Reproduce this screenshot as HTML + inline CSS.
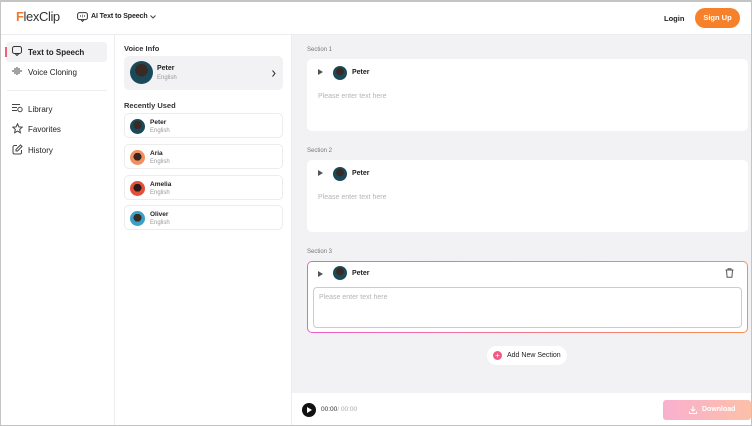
<!DOCTYPE html>
<html><head><meta charset="utf-8"><style>
*{box-sizing:border-box;margin:0;padding:0}
body{width:752px;height:426px;overflow:hidden;font-family:"Liberation Sans",sans-serif;color:#222;background:#fff;position:relative}
.frame{position:absolute;left:0;top:0;width:752px;height:426px;border:1px solid #c4c4c4;border-top-width:2px;z-index:10;pointer-events:none}
.a{position:absolute}
.hdr{left:0;top:0;width:752px;height:35px;border-bottom:1px solid #ececef;background:#fff}
.side{left:0;top:35px;width:115px;height:391px;border-right:1px solid #ececef}
.mid{left:115px;top:35px;width:177px;height:391px;border-right:1px solid #ececef}
.right{left:292px;top:35px;width:460px;height:358px;background:#f2f2f5}
.bot{left:292px;top:393px;width:460px;height:33px;background:#fff}
.nav{position:absolute;left:6px;width:101px;height:20px;font-size:8px;display:flex;align-items:center;padding-left:22px}
.nav svg{position:absolute;left:6px;top:4px}
.av{border-radius:50%;background:radial-gradient(circle at 50% 40%,#3a2a25 0 35%,#1a4a5a 36%);}
.vc{position:absolute;left:9px;width:159px;height:25px;border:1px solid #ececef;border-radius:5px;background:#fff}
.vc .av{position:absolute;left:5px;top:5px;width:15px;height:15px}
.vc b{position:absolute;left:25px;top:5px;font-size:6.5px}
.vc i{position:absolute;left:25px;top:14px;font-size:6px;color:#999;font-style:normal}
.sl{position:absolute;left:15px;font-size:6px;color:#777}
.card{position:absolute;left:15px;width:441px;height:72px;background:#fff;border-radius:5px}
.card .pl{position:absolute;left:11px;top:10px;width:0;height:0;border-left:5px solid #555;border-top:3.5px solid transparent;border-bottom:3.5px solid transparent}
.card .av{position:absolute;left:26px;top:5px;width:14px;height:14px}
.card b{position:absolute;left:45px;top:10px;font-size:7px}
.card .ph{position:absolute;left:11px;top:34px;font-size:7px;color:#b5b5b8}
</style></head><body>
<div class="frame"></div>
<div class="a hdr">
 <div class="a" style="left:16px;top:9px;font-size:13px;letter-spacing:-0.4px;color:#333"><span style="color:#f07a30;font-weight:bold">F</span>lexClip</div>
 <svg class="a" style="left:77px;top:12px" width="11" height="10" viewBox="0 0 11 10"><rect x="0.6" y="0.6" width="9.8" height="7" rx="2" fill="none" stroke="#333" stroke-width="1"/><path d="M4 7.6 5.5 9.4 7 7.6" fill="none" stroke="#333"/><path d="M3.5 3v2M5.5 2.5v3M7.5 3v2" stroke="#333" stroke-width=".6"/></svg>
 <div class="a" style="left:91px;top:13px;font-size:7px;font-weight:bold;letter-spacing:-0.1px">AI Text to Speech</div>
 <svg class="a" style="left:150px;top:15px" width="6" height="4"><path d="M.5.5 3 3 5.5.5" fill="none" stroke="#444"/></svg>
 <div class="a" style="left:664px;top:14px;font-size:7.5px;font-weight:bold">Login</div>
 <div class="a" style="left:695px;top:8px;width:45px;height:20px;border-radius:10px;background:#f7812a;color:#fff;font-size:7.5px;font-weight:bold;text-align:center;line-height:20px">Sign Up</div>
</div>
<div class="a side">
 <div class="nav" style="top:7px;background:#f2f2f5;border-radius:4px;font-weight:bold"><div class="a" style="left:-1px;top:5px;width:2px;height:10px;background:#f0607a"></div><svg width="10" height="10" viewBox="0 0 10 10"><rect x=".5" y=".5" width="9" height="7" rx="2" fill="none" stroke="#333"/><path d="M3 7.5 5 9.5 7 7.5" fill="none" stroke="#333"/></svg>Text to Speech</div>
 <div class="nav" style="top:27px"><svg width="10" height="10"><path d="M1 4v2M3 2v6M5 1v8M7 2v6M9 4v2" stroke="#444"/></svg>Voice Cloning</div>
 <div class="a" style="left:7px;top:55px;width:100px;height:1px;background:#eee"></div>
 <div class="nav" style="top:64px"><svg width="11" height="10"><path d="M0 1.5h8M0 4.5h5M0 7.5h5" stroke="#444"/><circle cx="8" cy="6.5" r="2.2" fill="none" stroke="#444"/></svg>Library</div>
 <div class="nav" style="top:84px"><svg width="11" height="11" viewBox="0 0 11 11"><path d="M5.5.8 6.9 3.9 10.2 4.2 7.7 6.4 8.4 9.8 5.5 8.1 2.6 9.8 3.3 6.4.8 4.2 4.1 3.9Z" fill="none" stroke="#444"/></svg>Favorites</div>
 <div class="nav" style="top:105px"><svg width="11" height="11" viewBox="0 0 11 11"><path d="M5 1.5H2.5a1.5 1.5 0 0 0-1.5 1.5v5.5a1.5 1.5 0 0 0 1.5 1.5h5.5A1.5 1.5 0 0 0 9.5 8.5V6" fill="none" stroke="#444"/><path d="M8.5 1 10 2.5 5.5 7H4V5.5Z" fill="none" stroke="#444"/></svg>History</div>
</div>
<div class="a mid">
 <div class="a" style="left:9px;top:9px;font-size:7.5px;font-weight:bold;color:#333">Voice Info</div>
 <div class="a" style="left:9px;top:21px;width:159px;height:34px;background:#f2f2f5;border-radius:5px">
  <div class="a av" style="left:6px;top:5px;width:23px;height:23px"></div>
  <div class="a" style="left:33px;top:9px;font-size:7px;font-weight:bold">Peter</div>
  <div class="a" style="left:33px;top:19px;font-size:6px;color:#999">English</div>
  <svg class="a" style="left:148px;top:14px" width="4" height="7"><path d="M.5.5 3 3.5.5 6.5" fill="none" stroke="#333"/></svg>
 </div>
 <div class="a" style="left:9px;top:66px;font-size:7.5px;font-weight:bold;color:#333">Recently Used</div>
 <div class="vc" style="top:78px"><div class="av"></div><b>Peter</b><i>English</i></div>
 <div class="vc" style="top:109px"><div class="av" style="background:radial-gradient(circle at 50% 45%,#3a2520 0 35%,#f09060 36%)"></div><b>Aria</b><i>English</i></div>
 <div class="vc" style="top:140px"><div class="av" style="background:radial-gradient(circle at 50% 45%,#2a1a18 0 35%,#e0503a 36%)"></div><b>Amelia</b><i>English</i></div>
 <div class="vc" style="top:170px"><div class="av" style="background:radial-gradient(circle at 50% 45%,#3a2a20 0 35%,#3aa0c8 36%)"></div><b>Oliver</b><i>English</i></div>
</div>
<div class="a right">
 <div class="sl" style="top:12px">Section 1</div>
 <div class="card" style="top:24px"><div class="pl" style="top:10px"></div><div class="av" style="top:7px"></div><b>Peter</b><div class="ph">Please enter text here</div></div>
 <div class="sl" style="top:113px">Section 2</div>
 <div class="card" style="top:125px"><div class="pl" style="top:10px"></div><div class="av" style="top:7px"></div><b>Peter</b><div class="ph">Please enter text here</div></div>
 <div class="sl" style="top:214px">Section 3</div>
 <div class="card" style="top:226px;height:72px;border:1.5px solid transparent;background:linear-gradient(#fff,#fff) padding-box,linear-gradient(90deg,#f060c8,#f79050) border-box">
  <div class="pl" style="top:9px;left:10px"></div><div class="av" style="left:25px;top:4px"></div><b style="left:44px;top:8px">Peter</b>
  <svg class="a" style="left:417px;top:6px" width="9" height="10"><path d="M.5 2h8M3 2V.7h3V2M1.5 2l.6 7.3h4.8L7.5 2" fill="none" stroke="#555"/></svg>
  <div class="a" style="left:5px;top:25px;width:429px;height:41px;border:1px solid #ccc;border-radius:4px"><div class="a" style="left:5px;top:6px;font-size:7px;color:#b5b5b8">Please enter text here</div></div>
 </div>
 <div class="a" style="left:195px;top:311px;width:80px;height:19px;border-radius:10px;background:#fff;font-size:7px;line-height:19px;padding-left:20px;white-space:nowrap">Add New Section<div class="a" style="left:6px;top:5px;width:9px;height:9px;border-radius:50%;background:#f05a82;color:#fff;font-size:8px;line-height:9px;text-align:center">+</div></div>
</div>
<div class="a bot">
 <div class="a" style="left:10px;top:10px;width:14px;height:14px;border-radius:50%;background:#111"><div class="a" style="left:5px;top:4px;border-left:5px solid #fff;border-top:3px solid transparent;border-bottom:3px solid transparent"></div></div>
 <div class="a" style="left:29px;top:13px;font-size:6.5px;color:#333">00:00<span style="color:#aaa">/ 00:00</span></div>
 <div class="a" style="left:371px;top:7px;width:88px;height:20px;border-radius:3px;background:linear-gradient(90deg,#f9b0d0,#fcc0a8);color:#fff;font-size:7px;font-weight:bold;line-height:20px;padding-left:39px">Download<svg class="a" style="left:26px;top:6px" width="8" height="8"><path d="M4 0v5M1.8 3 4 5.2 6.2 3M.5 5.5v2h7v-2" fill="none" stroke="#fff"/></svg></div>
</div>
</body></html>
